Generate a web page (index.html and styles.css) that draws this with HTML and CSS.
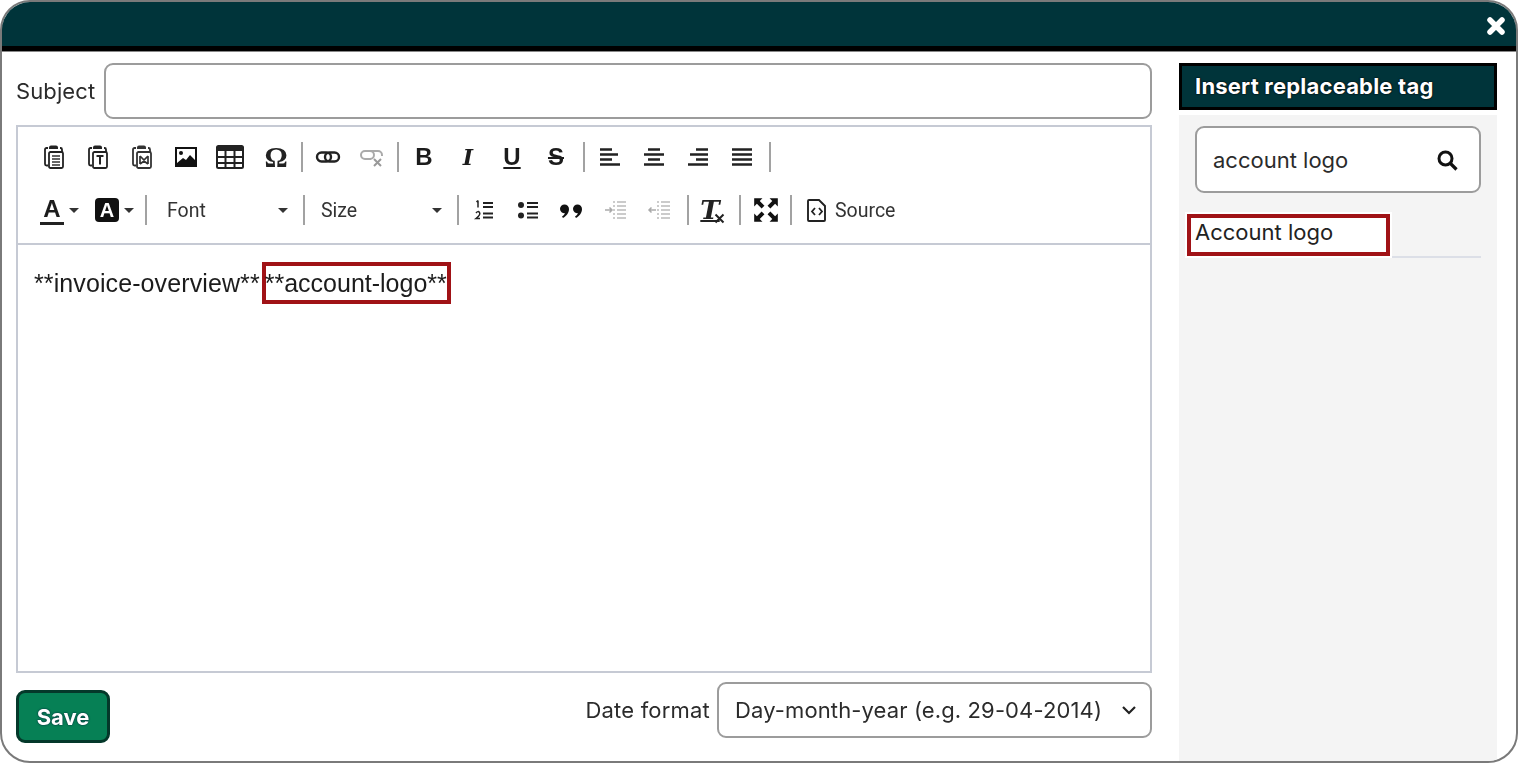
FILE: index.html
```html
<!DOCTYPE html>
<html lang="en">
<head>
<meta charset="utf-8">
<title>Template editor</title>
<link rel="stylesheet" href="styles.css">
</head>
<body>
<div class="window">
  <header class="titlebar">
    <svg class="close" width="20" height="20" viewBox="0 0 20 20"><path d="M4 4l12 12M16 4L4 16" stroke="#fff" stroke-width="5.5" stroke-linecap="round"/></svg>
  </header>
  <div class="content">
    <main class="main">
      <div class="subject-row">
        <label class="field-label">Subject</label>
        <div class="input subject-input"></div>
      </div>
      <section class="editor">
        <div class="toolbar">
          <div class="tb-row">
            <span class="btn"><svg class="ico" viewBox="0 0 26 26"><path d="M7 4H5.500A1.500 1.500 0 0 0 4 5.500V20a1.500 1.500 0 0 0 1.500 1.500H7M19 4h.5A1.500 1.500 0 0 1 21 5.500V8" fill="none" stroke="#222" stroke-width="1.800"/><path d="M8 5V3.500Q8 1.500 10 1.500h5Q17 1.500 17 3.500V5Z" fill="#222"/><rect x="8" y="8" width="14" height="16" rx="1.500" fill="#fff" stroke="#222" stroke-width="1.800"/><path d="M11 12h8M11 15h8M11 18h8M11 21h8" stroke="#333" stroke-width="1.500"/></svg></span>
            <span class="btn"><svg class="ico" viewBox="0 0 26 26"><path d="M7 4H5.500A1.500 1.500 0 0 0 4 5.500V20a1.500 1.500 0 0 0 1.500 1.500H7M19 4h.5A1.500 1.500 0 0 1 21 5.500V8" fill="none" stroke="#222" stroke-width="1.800"/><path d="M8 5V3.500Q8 1.500 10 1.500h5Q17 1.500 17 3.500V5Z" fill="#222"/><rect x="8" y="8" width="14" height="16" rx="1.500" fill="#fff" stroke="#222" stroke-width="1.800"/><path d="M11.500 12h7M15 12v8.500" stroke="#222" stroke-width="2"/></svg></span>
            <span class="btn"><svg class="ico" viewBox="0 0 26 26"><path d="M7 4H5.500A1.500 1.500 0 0 0 4 5.500V20a1.500 1.500 0 0 0 1.500 1.500H7M19 4h.5A1.500 1.500 0 0 1 21 5.500V8" fill="none" stroke="#333" stroke-width="1.800"/><path d="M8 5V3.500Q8 1.500 10 1.500h5Q17 1.500 17 3.500V5Z" fill="#333"/><rect x="8" y="8" width="14" height="16" rx="1.500" fill="#fff" stroke="#333" stroke-width="1.800"/><path d="M11 12v8M19 12v8M11 12l4 4 4-4M11 20l4-3 4 3" fill="none" stroke="#333" stroke-width="1.700"/></svg></span>
            <span class="btn"><svg class="ico" viewBox="0 0 26 26"><rect x="2" y="3" width="22" height="20" fill="#111"/><rect x="4" y="5" width="18" height="16" fill="#fff"/><circle cx="8" cy="9" r="2" fill="#111"/><path d="M4 19l6-5 3 2 4-5 5 5v5H4Z" fill="#111"/></svg></span>
            <span class="btn"><svg class="ico ico-wide" viewBox="0 0 28 26"><rect x="1" y="2" width="26" height="22" rx="1.500" fill="#fff" stroke="#222" stroke-width="2"/><rect x="1" y="2" width="26" height="5" fill="#222"/><path d="M1 13h26M1 19h26M9.500 6v18M18.500 6v18" stroke="#222" stroke-width="2"/></svg></span>
            <span class="btn glyph-omega">Ω</span>
            <i class="sep"></i>
            <span class="btn"><svg class="ico" viewBox="0 0 26 26"><rect x="2" y="8.500" width="14" height="9" rx="4.500" fill="none" stroke="#222" stroke-width="2.400"/><rect x="10" y="8.500" width="14" height="9" rx="4.500" fill="none" stroke="#222" stroke-width="2.400"/></svg></span>
            <span class="btn"><svg class="ico" viewBox="0 0 26 26"><rect x="2" y="7" width="13" height="8" rx="4" fill="none" stroke="#aaa" stroke-width="2"/><path d="M10 7h9a4 4 0 0 1 4 4v1M10 15h2" fill="none" stroke="#aaa" stroke-width="2"/><path d="M15 15l7 7M22 15l-7 7" stroke="#999" stroke-width="2"/></svg></span>
            <i class="sep sep-mid"></i>
            <span class="btn fmt fmt-b">B</span>
            <span class="btn fmt fmt-i">I</span>
            <span class="btn fmt fmt-u">U</span>
            <span class="btn fmt fmt-s">S</span>
            <i class="sep"></i>
            <span class="btn"><svg class="ico" viewBox="0 0 26 26"><path d="M3 5.500h12M3 10.500h18M3 15.500h12M3 20.500h20" stroke="#222" stroke-width="2.400"/></svg></span>
            <span class="btn"><svg class="ico" viewBox="0 0 26 26"><path d="M7 5.500h12M3 10.500h20M7 15.500h12M3 20.500h20" stroke="#222" stroke-width="2.400"/></svg></span>
            <span class="btn"><svg class="ico" viewBox="0 0 26 26"><path d="M11 5.500h12M5 10.500h18M11 15.500h12M3 20.500h20" stroke="#222" stroke-width="2.400"/></svg></span>
            <span class="btn"><svg class="ico" viewBox="0 0 26 26"><path d="M3 5.500h20M3 10.500h20M3 15.500h20M3 20.500h20" stroke="#222" stroke-width="2.600"/></svg></span>
            <i class="sep"></i>
          </div>
          <div class="tb-row">
            <span class="drop"><span class="fmt color-a">A</span><i class="caret"></i></span>
            <span class="drop"><span class="bg-a">A</span><i class="caret"></i></span>
            <i class="sep sep-tight"></i>
            <span class="combo combo-font"><span>Font</span><i class="caret"></i></span>
            <i class="sep sep-combo"></i>
            <span class="combo combo-size"><span>Size</span><i class="caret"></i></span>
            <i class="sep sep-combo"></i>
            <span class="btn"><svg class="ico" viewBox="0 0 26 26"><path d="M12 6h10M12 10h10M12 16.500h10M12 20.500h10" stroke="#222" stroke-width="2"/><path d="M7 3.500v7M5.500 5L7 3.500" fill="none" stroke="#222" stroke-width="1.500"/><path d="M5 16q2-2.500 3.500-.5T5 21.500h4" fill="none" stroke="#222" stroke-width="1.500"/></svg></span>
            <span class="btn"><svg class="ico" viewBox="0 0 26 26"><circle cx="6" cy="8" r="3" fill="#222"/><circle cx="6" cy="18.500" r="3" fill="#222"/><path d="M12 6h11M12 10h11M12 16.500h11M12 20.500h11" stroke="#222" stroke-width="2"/></svg></span>
            <span class="btn"><svg class="ico" viewBox="0 0 26 26"><path d="M1 12a4.500 4.500 0 1 1 9 0c0 4-2.500 7-6 9l-1-1.500c1.500-1 2.500-2 3-3.200A4.500 4.500 0 0 1 1 12ZM14 12a4.500 4.500 0 1 1 9 0c0 4-2.500 7-6 9l-1-1.500c1.500-1 2.500-2 3-3.200A4.500 4.500 0 0 1 14 12Z" fill="#111"/></svg></span>
            <span class="btn"><svg class="ico" viewBox="0 0 26 26"><path d="M14 5h9M14 9h9M14 13h9M14 17h9M14 21h9" stroke="#bbb" stroke-width="1.500"/><path d="M11 4v18" stroke="#bbb" stroke-width="1.500" stroke-dasharray="2 2"/><path d="M2 13h7M6.500 10.500L9 13l-2.500 2.500" fill="none" stroke="#aaa" stroke-width="1.500"/></svg></span>
            <span class="btn"><svg class="ico" viewBox="0 0 26 26"><path d="M14 5h9M14 9h9M14 13h9M14 17h9M14 21h9" stroke="#bbb" stroke-width="1.500"/><path d="M11 4v18" stroke="#bbb" stroke-width="1.500" stroke-dasharray="2 2"/><path d="M2 13h7M4.500 10.500L2 13l2.500 2.500" fill="none" stroke="#aaa" stroke-width="1.500"/></svg></span>
            <i class="sep"></i>
            <span class="btn clear-fmt"><span class="clear-t">T</span><svg class="clear-x" width="11" height="11" viewBox="0 0 11 11"><path d="M1.500 1.500l8 8M9.500 1.500l-8 8" stroke="#222" stroke-width="2"/></svg></span>
            <i class="sep"></i>
            <span class="btn"><svg class="ico" viewBox="2 2 22 22"><path d="M3 3h7L7.700 5.300l4 4-2.400 2.400-4-4L3 10ZM23 3v7l-2.300-2.300-4 4-2.400-2.400 4-4L16 3ZM3 23v-7l2.300 2.300 4-4 2.400 2.400-4 4L10 23ZM23 23h-7l2.300-2.300-4-4 2.400-2.400 4 4L23 16Z" fill="#111"/></svg></span>
            <i class="sep sep-last"></i>
            <span class="source"><svg class="ico" viewBox="0 0 26 26"><path d="M5 3h10l6 6v14a1 1 0 0 1-1 1H5a1 1 0 0 1-1-1V4a1 1 0 0 1 1-1Z" fill="none" stroke="#222" stroke-width="1.900"/><path d="M11 11l-3 3.500 3 3.500M15 11l3 3.500-3 3.500" fill="none" stroke="#222" stroke-width="1.800"/></svg><span>Source</span></span>
          </div>
        </div>
        <div class="editor-body"><span class="plain">**invoice-overview**</span><span class="mark">**account-logo**</span></div>
      </section>
      <footer class="footer">
        <button class="save" type="button">Save</button>
        <div class="date-group">
          <label class="field-label date-label">Date format</label>
          <div class="select">
            <span>Day-month-year (e.g. 29-04-2014)</span>
            <svg width="16" height="10" viewBox="0 0 16 10"><path d="M2 2l6 6 6-6" fill="none" stroke="#222" stroke-width="2.200"/></svg>
          </div>
        </div>
      </footer>
    </main>
    <aside class="side">
      <h2 class="side-title">Insert replaceable tag</h2>
      <div class="side-panel">
        <div class="input search">
          <span>account logo</span>
          <svg width="24" height="24" viewBox="0 0 24 24"><circle cx="10.500" cy="10.500" r="6.500" fill="none" stroke="#111" stroke-width="3"/><path d="M15.500 15.500l6 6" stroke="#111" stroke-width="3.200"/></svg>
        </div>
        <div class="result-row">
          <div class="result">Account logo</div>
        </div>
      </div>
    </aside>
  </div>
</div>
</body>
</html>
```

FILE: styles.css
```css
* { box-sizing: border-box; }
html, body { margin: 0; padding: 0; background: #fff; }
body { width: 1518px; height: 763px; overflow: hidden; font-family: Inter, "Liberation Sans", sans-serif; color: #222; }

.window {
  width: 1518px;
  height: 763px;
  border: 2px solid #7a7a7a;
  border-radius: 30px;
  overflow: hidden;
  display: flex;
  flex-direction: column;
  background: #fff;
  filter: blur(0.35px);
}
.titlebar {
  height: 49px;
  flex: none;
  background: #00343a;
  border-bottom: 5px solid #000;
  box-shadow: 0 1px 0 #888;
  display: flex;
  align-items: center;
  justify-content: flex-end;
  padding-right: 10px;
}
.close { margin-top: 3px; }

.content {
  flex: 1;
  min-height: 0;
  display: grid;
  grid-template-columns: 1136px 318px;
  column-gap: 27px;
  padding: 12px 0 0 14px;
}

.main { display: flex; flex-direction: column; }
.subject-row { display: flex; align-items: center; gap: 9px; height: 56px; flex: none; }
.field-label { font-size: 22px; color: #2b2b2b; letter-spacing: 0.1px; }
.date-label { letter-spacing: 0.2px; }
.input { background: #fff; border: 2px solid #9c9c9c; border-radius: 9px; }
.subject-input { flex: 1; height: 56px; }

.editor {
  margin-top: 6px;
  height: 548px;
  flex: none;
  border: 2px solid #c6cad4;
  display: flex;
  flex-direction: column;
}
.toolbar {
  height: 118px;
  flex: none;
  border-bottom: 2px solid #c6cad4;
  padding: 15px 0 0 14px;
  display: flex;
  flex-direction: column;
  gap: 23px;
}
.tb-row { display: flex; align-items: center; height: 30px; }
.btn { width: 44px; height: 30px; flex: none; display: flex; align-items: center; justify-content: center; }
.ico { width: 26px; height: 26px; display: block; flex: none; }
.ico-wide { width: 28px; }
.sep { width: 2px; height: 30px; background: #a2a2a2; margin: 0 3px 0 5px; flex: none; }
.sep-mid { margin: 0 3px; }
.sep-tight { margin: 0 3px 0 11px; }
.sep-combo { margin: 0 3px 0 0; }
.sep-last { margin: 0 0 0 2px; }

.glyph-omega { font: bold 29px "Liberation Serif", serif; color: #222; padding-left: 4px; }
.fmt { color: #1c1c1c; font-weight: 700; font-size: 24px; }
.fmt-b { font-family: "Liberation Sans", sans-serif; }
.fmt-i { font-family: "DejaVu Serif", serif; font-style: italic; font-size: 22px; }
.fmt-u { font-family: "Liberation Sans", sans-serif; text-decoration: underline; text-decoration-thickness: 2px; text-underline-offset: 2px; }
.fmt-s { font-family: "Liberation Sans", sans-serif; text-decoration: line-through; text-decoration-thickness: 2px; }

.drop { width: 51px; height: 30px; flex: none; display: flex; align-items: center; padding-left: 8px; gap: 4px; }
.color-a {
  width: 24px;
  text-align: center;
  font-family: "Liberation Sans", sans-serif;
  font-size: 24px;
  line-height: 26px;
  border-bottom: 3px solid #222;
}
.bg-a {
  width: 24px;
  height: 24px;
  margin-left: 4px;
  background: #111;
  color: #fff;
  border-radius: 4px;
  font: 700 20px/24px "Liberation Sans", sans-serif;
  text-align: center;
}
.caret { width: 0; height: 0; border: 5px solid transparent; border-top: 5px solid #333; border-bottom: 0; flex: none; }
.drop .caret { margin-left: 1px; }

.combo {
  height: 30px;
  flex: none;
  display: flex;
  align-items: center;
  justify-content: space-between;
  font: 19.5px "Roboto", "Liberation Sans", sans-serif;
  color: #333;
}
.combo-font { width: 153px; padding: 0 15px 0 17px; }
.combo-size { width: 149px; padding: 0 15px 0 13px; }
.clear-fmt { position: relative; width: 42px; }
.clear-t { font: italic 700 26px "DejaVu Serif", serif; color: #222; text-decoration: underline; text-decoration-thickness: 2px; margin-right: 6px; }
.clear-x { position: absolute; right: 9px; bottom: 1px; }
.source { display: flex; align-items: center; gap: 5px; padding-left: 12px; font: 19.5px "Roboto", "Liberation Sans", sans-serif; color: #333; }

.editor-body {
  padding: 17px 16px;
  font: 25px/34px "Liberation Sans", sans-serif;
  color: #1c1c1c;
  display: flex;
  align-items: flex-start;
}
.plain { padding-top: 4px; letter-spacing: 0.1px; }
.mark { border: 4px solid #a01216; margin-left: 2px; text-indent: -1px; }

.footer { display: flex; justify-content: space-between; align-items: flex-start; margin-top: 9px; }
.save {
  margin-top: 8px;
  width: 94px;
  height: 53px;
  background: #068055;
  border: 3px solid #04382a;
  border-radius: 9px;
  color: #fff;
  font: 700 22px Inter, "Liberation Sans", sans-serif;
  text-shadow: 0 0 2px #013;
  padding: 0;
}
.date-group { display: flex; align-items: center; gap: 7px; }
.select {
  width: 435px;
  height: 56px;
  display: flex;
  align-items: center;
  justify-content: space-between;
  padding: 0 13px 0 16px;
  border: 2px solid #9c9c9c;
  border-radius: 9px;
  font-size: 22px;
  letter-spacing: 0.12px;
  color: #2b2b2b;
}

.side { display: flex; flex-direction: column; min-height: 0; }
.side-title {
  margin: 0;
  height: 47px;
  flex: none;
  background: #00343a;
  border: 3px solid #000;
  color: #fff;
  font: 700 22px/40px Inter, "Liberation Sans", sans-serif;
  letter-spacing: 0.2px;
  padding-left: 13px;
  text-shadow: 0 0 2px #000, 0 0 1px #000;
}
.side-panel { flex: 1; margin-top: 5px; background: #f4f4f4; padding: 11px 16px 0; }
.search {
  height: 67px;
  display: flex;
  align-items: center;
  justify-content: space-between;
  padding: 0 20px 0 16px;
  font-size: 22px;
  color: #2b2b2b;
}
.result-row { margin-top: 21px; border-bottom: 2px solid #dcdfe7; height: 44px; }
.result {
  width: 203px;
  height: 42px;
  margin-left: -8px;
  border: 4px solid #a01216;
  background: #fff;
  box-shadow: 0 0 0 2px #fff;
  padding-left: 4px;
  font-size: 22px;
  line-height: 28px;
  color: #222;
}
```
